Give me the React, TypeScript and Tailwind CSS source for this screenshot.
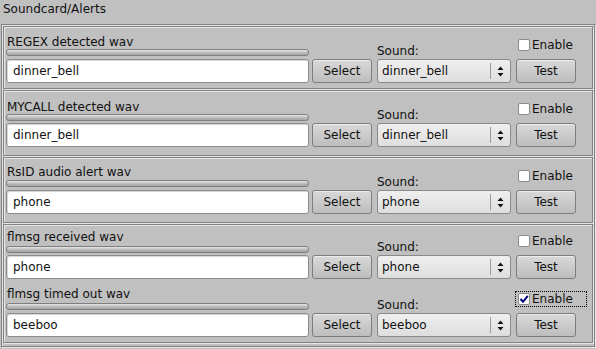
import React from "react"

type AlertRow = {
  label: string
  file: string
  sound: string
  enabled?: boolean
  focused?: boolean
  // vertical spacing, these come straight off the original dialog
  rowGap: string
  sliderGap: string
  inputGap: string
}

type AlertGroup = {
  height: string
  padTop: string
  rows: AlertRow[]
}

const groups: AlertGroup[] = [
  {
    height: "h-[63px]",
    padTop: "pt-[8px]",
    rows: [
      { label: "REGEX detected wav", file: "dinner_bell", sound: "dinner_bell", rowGap: "mt-0", sliderGap: "mt-0", inputGap: "mt-[3px]" },
    ],
  },
  {
    height: "h-[66px]",
    padTop: "pt-[9px]",
    rows: [
      { label: "MYCALL detected wav", file: "dinner_bell", sound: "dinner_bell", rowGap: "mt-0", sliderGap: "mt-0", inputGap: "mt-[2px]" },
    ],
  },
  {
    height: "h-[66px]",
    padTop: "pt-[7px]",
    rows: [
      { label: "RsID audio alert wav", file: "phone", sound: "phone", rowGap: "mt-0", sliderGap: "mt-[1px]", inputGap: "mt-[3px]" },
    ],
  },
  {
    height: "h-[119px]",
    padTop: "pt-[5px]",
    rows: [
      { label: "flmsg received wav", file: "phone", sound: "phone", rowGap: "mt-0", sliderGap: "mt-[2px]", inputGap: "mt-[2px]" },
      { label: "flmsg timed out wav", file: "beeboo", sound: "beeboo", enabled: true, focused: true, rowGap: "mt-[8px]", sliderGap: "mt-[2px]", inputGap: "mt-[3px]" },
    ],
  },
]

const frame =
  "border border-[#828282] shadow-[inset_1px_1px_0_#e6e6e6,1px_1px_0_#e6e6e6]"

const button =
  "h-[24px] flex items-center justify-center rounded-[3px] border border-[#7d7d7d] bg-gradient-to-b from-[#d9d9d9] to-[#bdbdbd] shadow-[inset_0_1px_0_#ececec]"

function CheckBox({ checked }: { checked?: boolean }) {
  return (
    <div className="w-[12px] h-[12px] rounded-[2px] border border-[#8a8a8a] bg-white flex items-center justify-center">
      {checked && (
        <svg width="10" height="10" viewBox="0 0 10 10">
          <polyline points="1.5,5 4,7.8 8.8,1.8" fill="none" stroke="#00007a" strokeWidth="2" />
        </svg>
      )}
    </div>
  )
}

function ChoiceArrows() {
  return (
    <svg width="7" height="11" viewBox="0 0 7 11">
      <polygon points="3.5,0.5 6.5,4 0.5,4" fill="#111" />
      <polygon points="0.5,7 6.5,7 3.5,10.5" fill="#111" />
    </svg>
  )
}

function Row({ row }: { row: AlertRow }) {
  return (
    <div className={`flex items-end ${row.rowGap}`}>
      {/* label, level bar and file name */}
      <div className="w-[303px] flex flex-col">
        <div className="h-[14px] leading-[14px] pl-[1px] whitespace-nowrap">{row.label}</div>
        <div
          className={`${row.sliderGap} h-[7px] rounded-[3px] border border-[#7f7f7f] bg-gradient-to-b from-[#e8e8e8] via-[#bdbdbd] to-[#a3a3a3]`}
        />
        <div
          className={`${row.inputGap} h-[24px] rounded-[3px] border border-[#8c8c8c] bg-white flex items-center pl-[6px] shadow-[inset_1px_1px_0_#d8d8d8]`}
        >
          {row.file}
        </div>
      </div>

      <div className={`ml-[3px] w-[60px] ${button}`}>Select</div>

      {/* sound picker */}
      <div className="ml-[5px] w-[134px] flex flex-col">
        <div className="h-[14px] leading-[14px] mb-[1px]">Sound:</div>
        <div className="h-[24px] rounded-[3px] border border-[#8a8a8a] bg-gradient-to-b from-[#efefef] to-[#dedede] flex items-center">
          <span className="flex-1 pl-[4px]">{row.sound}</span>
          <div className="h-[16px] w-[1px] bg-[#9a9a9a]" />
          <div className="w-[19px] flex justify-center">
            <ChoiceArrows />
          </div>
        </div>
      </div>

      {/* enable + test */}
      <div className="ml-[5px] w-[60px] flex flex-col">
        <div
          className={`w-[70px] h-[14px] mb-[7px] flex items-center pl-[2px] ${
            row.focused ? "outline outline-1 outline-dotted outline-black" : ""
          }`}
        >
          <CheckBox checked={row.enabled} />
          <span className="ml-[2px] leading-[14px]">Enable</span>
        </div>
        <div className={`w-[60px] ${button}`}>Test</div>
      </div>
    </div>
  )
}

export default function App() {
  return (
    <div className="w-[596px] h-[349px] bg-[#c0c0c0] text-[12px] text-[#111] font-['DejaVu_Sans',sans-serif] overflow-hidden">
      <div className="h-[24px] pt-[2px] pl-[3px] leading-[14px]">Soundcard/Alerts</div>

      <div className={`ml-[1px] w-[594px] h-[323px] p-[1px] flex flex-col gap-[1px] ${frame}`}>
        {groups.map((group, i) => (
          <div key={i} className={`${group.height} ${group.padTop} pl-[2px] ${frame}`}>
            {group.rows.map((row) => (
              <Row key={row.label} row={row} />
            ))}
          </div>
        ))}
      </div>
    </div>
  )
}
